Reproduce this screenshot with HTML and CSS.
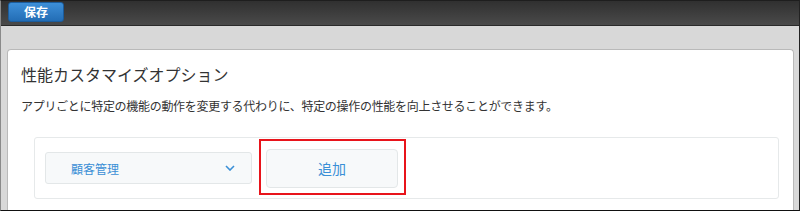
FILE: index.html
```html
<!DOCTYPE html>
<html lang="ja">
<head>
<meta charset="utf-8">
<link rel="stylesheet" href="styles.css">
</head>
<body>
<div class="frame">
  <header class="toolbar">
    <button class="save">保存</button>
  </header>
  <main class="content">
    <section class="panel">
      <h1 class="title">性能カスタマイズオプション</h1>
      <p class="desc">アプリごとに特定の機能の動作を変更する代わりに、特定の操作の性能を向上させることができます。</p>
      <div class="option-box">
        <div class="select">
          <span class="select-text">顧客管理</span>
          <svg class="chevron" width="10" height="6" viewBox="0 0 10 6"><path d="M1 1 L5 5 L9 1" fill="none" stroke="#3a8fd6" stroke-width="1.6"/></svg>
        </div>
        <div class="add-wrap">
          <button class="add">追加</button>
          <span class="highlight"></span>
        </div>
      </div>
    </section>
  </main>
</div>
</body>
</html>
```
FILE: styles.css
```css
html, body {
  margin: 0;
  padding: 0;
}
body {
  width: 800px;
  height: 211px;
  overflow: hidden;
  font-family: "Noto Sans CJK JP", "Noto Sans", sans-serif;
  color: #333;
}
.frame {
  box-sizing: border-box;
  width: 800px;
  height: 211px;
  border-top: 1px solid #1e1e1e;
  border-right: 1px solid #222;
  border-bottom: 1px solid #111;
  border-left: 1px solid #8a8a8a;
  overflow: hidden;
  display: flex;
  flex-direction: column;
  background: #d9d9d9;
}
.toolbar {
  box-sizing: border-box;
  height: 25px;
  flex: none;
  background: linear-gradient(#303030, #4a4a4a);
  border-bottom: 1px solid #2a2a2a;
  display: flex;
  align-items: flex-start;
  padding: 1px 0 0 7px;
}
.save {
  box-sizing: border-box;
  width: 56px;
  height: 20px;
  border: 1px solid #1b5c9c;
  border-radius: 3px;
  background: linear-gradient(#3d8fd8, #236db5);
  color: #fff;
  font-family: inherit;
  font-weight: bold;
  font-size: 12px;
  line-height: 16px;
  padding: 0;
}
.content {
  flex: 1;
  padding: 23px 5px 0 6px;
  background: #d8d8d8;
  display: flex;
}
.panel {
  flex: 1;
  background: #fff;
  border: 1px solid #b9b9b9;
  border-bottom: none;
  border-radius: 4px 4px 0 0;
  padding: 12px 12px 0 13px;
}
.title {
  margin: 0;
  font-size: 16px;
  font-weight: normal;
  line-height: 24px;
  color: #333;
}
.desc {
  margin: 10px 0 0;
  font-size: 12px;
  letter-spacing: -0.3px;
  line-height: 20px;
  color: #333;
}
.option-box {
  margin: 21px 0 0 13px;
  width: 745px;
  box-sizing: border-box;
  height: 62px;
  border: 1px solid #e6e9ea;
  border-radius: 3px;
  display: flex;
  align-items: center;
  padding-left: 10px;
  gap: 14px;
}
.select {
  box-sizing: border-box;
  width: 207px;
  height: 32px;
  background: #f7f9fa;
  border: 1px solid #e3e7e8;
  border-radius: 3px;
  display: flex;
  align-items: center;
  justify-content: space-between;
  padding: 0 16px 0 25px;
}
.select-text {
  font-size: 12px;
  color: #3a8fd6;
}
.add-wrap {
  position: relative;
  display: flex;
}
.add {
  box-sizing: border-box;
  width: 132px;
  height: 39px;
  background: #f7f9fa;
  border: 1px solid #e3e7e8;
  border-radius: 4px;
  font-family: inherit;
  font-size: 14px;
  color: #3a8fd6;
  padding: 0;
}
.highlight {
  position: absolute;
  left: -7px;
  top: -10px;
  width: 147px;
  height: 56px;
  box-sizing: border-box;
  border: 2px solid #e8141b;
}
```
